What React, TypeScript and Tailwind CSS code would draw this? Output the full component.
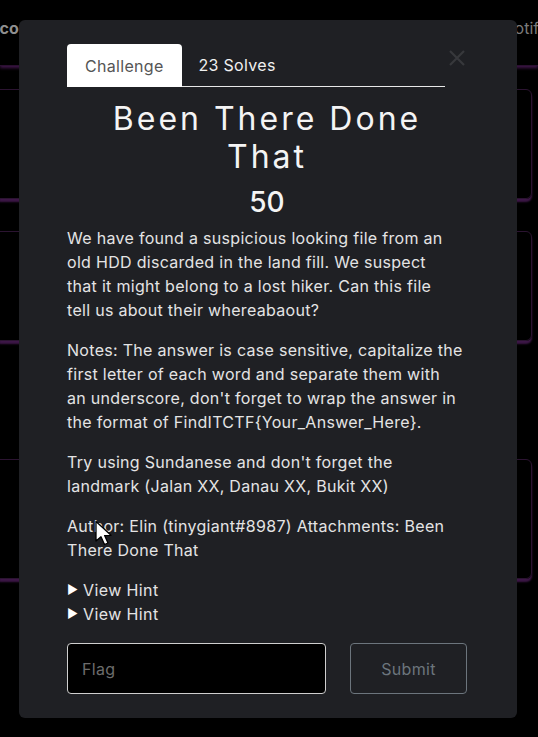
import React from 'react';

// line breaks follow the original layout
const paragraphs = [
  [
    'We have found a suspicious looking file from an',
    'old HDD discarded in the land fill. We suspect',
    'that it might belong to a lost hiker. Can this file',
    'tell us about their whereabaout?',
  ],
  [
    'Notes: The answer is case sensitive, capitalize the',
    'first letter of each word and separate them with',
    "an underscore, don't forget to wrap the answer in",
    'the format of FindITCTF{Your_Answer_Here}.',
  ],
  ["Try using Sundanese and don't forget the", 'landmark (Jalan XX, Danau XX, Bukit XX)'],
  ['Author: Elin (tinygiant#8987) Attachments: Been', 'There Done That'],
];

function BgCard({ className = '' }: { className?: string }) {
  return (
    <div
      className={`w-[533px] -ml-px border border-[#2b1431] rounded-r-md shadow-[0_3px_2px_#3d1747] ${className}`}
    />
  );
}

function Cursor() {
  return (
    <svg
      className="absolute left-[94px] top-[520px]"
      width="20"
      height="28"
      viewBox="0 0 20 28"
    >
      <path
        d="M2 1.5 L2 21 L7 16.8 L10.5 24.5 L14 23 L10.6 15.6 L17 15.3 Z"
        fill="#ffffff"
        stroke="#000000"
        strokeWidth="1.3"
        strokeLinejoin="round"
      />
    </svg>
  );
}

export default function App() {
  return (
    <div className="relative w-[538px] h-[737px] overflow-hidden bg-black font-['Inter',sans-serif]">
      {/* page behind the modal */}
      <div className="h-[66px] pb-[10px] flex items-center justify-between shadow-[0_2px_3px_#3f1649] border-b border-[#2a1030]">
        <span className="-ml-[11px] text-[16px] font-bold text-[#8f8f8f]">Scoreboard</span>
        <span className="mr-[-60px] text-[16px] text-[#7a7a7a]">Notifications</span>
      </div>
      <div className="flex flex-col pt-[23px]">
        <BgCard className="h-[110px]" />
        <BgCard className="h-[110px] mt-[32px]" />
        <BgCard className="h-[120px] mt-[118px]" />
      </div>

      {/* challenge modal */}
      <div className="absolute left-[19px] top-[20px] w-[498px] h-[698px] rounded-md bg-[#1f2024] pl-[48px] pr-[50px] pt-[24px] text-[#e4e4e4]">
        <div className="flex items-start gap-[4px]">
          <div className="flex-1 flex items-end border-b border-[#e8e8e8]">
            <div className="-mb-px h-[43px] px-[18px] flex items-center bg-white rounded-t-[4px] text-[16px] text-[#555555] tracking-[0.3px]">
              Challenge
            </div>
            <div className="h-[42px] px-[17px] flex items-center text-[16px] text-[#f0f0f0] tracking-[0.3px]">
              23 Solves
            </div>
          </div>
          <button className="mt-[6px] mr-[2px] w-[16px] h-[16px] flex items-center justify-center" aria-label="Close">
            <svg width="16" height="16" viewBox="0 0 16 16">
              <path d="M1 1 L15 15 M15 1 L1 15" stroke="#37383c" strokeWidth="2.2" />
            </svg>
          </button>
        </div>

        <h2 className="mt-[13px] px-[10px] text-center text-[32px] leading-[38px] tracking-[3px] text-[#f4f4f4] font-normal">
          Been There Done That
        </h2>
        <div className="mt-[10px] text-center text-[28px] leading-[32px] font-medium text-[#f4f4f4]">50</div>

        <div className="mt-[8px] text-[16px] leading-[24px] tracking-[0.3px]">
          {paragraphs.map((lines, i) => (
            <p key={i} className="mb-[16px]">
              {lines.map((l, j) => (
                <React.Fragment key={j}>
                  {l}
                  {j < lines.length - 1 && <br />}
                </React.Fragment>
              ))}
            </p>
          ))}
        </div>

        <div className="text-[16px] leading-[24px] tracking-[0.4px]">
          {[0, 1].map(i => (
            <div key={i} className="flex items-center">
              <span className="w-[16px] text-[12px] text-white">▶</span>
              <span>View Hint</span>
            </div>
          ))}
        </div>

        <div className="mt-[17px] flex gap-[24px]">
          <input
            placeholder="Flag"
            className="w-[259px] h-[51px] px-[14px] rounded-[4px] border border-[#cfcfcf] bg-black text-[16px] text-white placeholder-[#6c6c6c] tracking-[0.3px] outline-none"
          />
          <button className="w-[118px] h-[51px] rounded-[4px] border border-[#6c757d] text-[16px] text-[#6c757d] tracking-[0.3px]">
            Submit
          </button>
        </div>
      </div>

      <Cursor />
    </div>
  );
}
